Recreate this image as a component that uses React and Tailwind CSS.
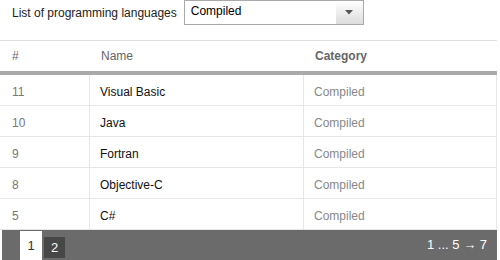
import React from 'react';

const rows = [
	{ id: 11, name: 'Visual Basic', category: 'Compiled' },
	{ id: 10, name: 'Java', category: 'Compiled' },
	{ id: 9, name: 'Fortran', category: 'Compiled' },
	{ id: 8, name: 'Objective-C', category: 'Compiled' },
	{ id: 5, name: 'C#', category: 'Compiled' },
];

export default function App() {
	return (
		<div className="w-[500px] h-[260px] bg-white overflow-hidden text-[12px] font-['Liberation_Sans',Arial,sans-serif]">
			{/* filter */}
			<div className="flex items-center h-[25px] pl-3 gap-[7px]">
				<span className="text-[#222]">List of programming languages</span>
				<div className="flex w-[180px] h-[25px] border border-[#aaa] bg-white">
					<span className="flex-1 pl-[6px] leading-[20px] text-black">Compiled</span>
					<div className="w-[27px] h-full flex items-center justify-center bg-gradient-to-b from-white to-[#dcdcdc]">
						<svg width="8" height="5" viewBox="0 0 8 5">
							<path d="M0 0H8L4 4.5Z" fill="#555" />
						</svg>
					</div>
				</div>
			</div>

			{/* table */}
			<div className="mt-[15px] mr-[3px] border-t border-[#ddd]">
				<div className="grid grid-cols-[90px_214px_1fr] h-[34px] items-center text-[#666] border-b-4 border-[#aaa]">
					<div className="pl-3">#</div>
					<div className="pl-[11px]">Name</div>
					<div className="pl-[11px] font-bold">Category</div>
				</div>
				{rows.map((r) => (
					<div key={r.id} className="grid grid-cols-[90px_214px_1fr] h-[31px] border-b border-[#e6e6e6]">
						<div className="pl-3 pt-[3px] flex items-center text-[#777] border-r border-[#e6e6e6]">{r.id}</div>
						<div className="pl-[10px] pt-[3px] flex items-center text-[#111] border-r border-[#e6e6e6]">{r.name}</div>
						<div className="pl-[10px] pt-[3px] flex items-center text-[#888] border-r border-[#e6e6e6]">{r.category}</div>
					</div>
				))}

				{/* pager */}
				<div className="flex items-center h-[30px] ml-[2px] bg-[#6b6b6b] text-[13px]">
					<div className="flex items-end self-stretch pl-[18px] gap-[2px]">
						<span className="w-[22px] h-[29px] bg-white text-[#333] flex items-center justify-center">1</span>
						<span className="w-[21px] h-[21px] mb-[2px] bg-[#474747] text-white flex items-center justify-center">2</span>
					</div>
					<span className="ml-auto pr-[10px] text-white">1 ... 5 → 7</span>
				</div>
			</div>
		</div>
	);
}
